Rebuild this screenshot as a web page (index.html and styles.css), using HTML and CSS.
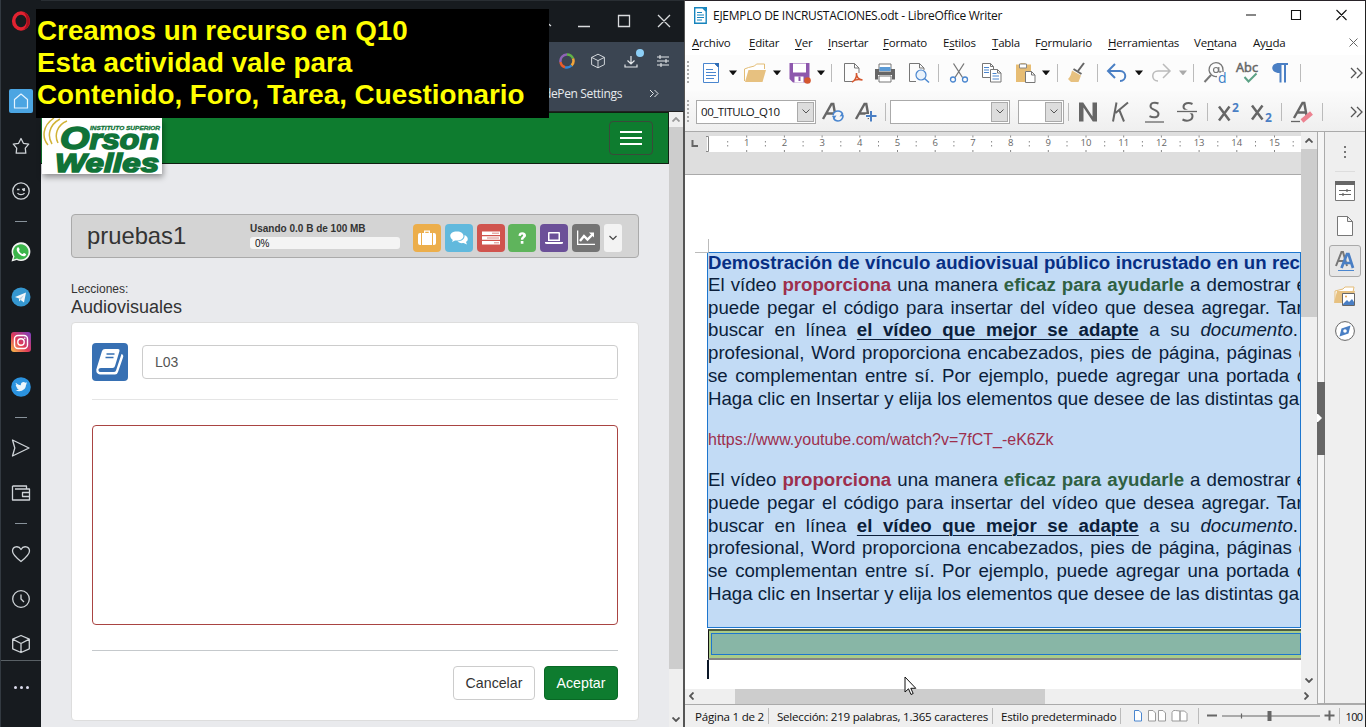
FILE: index.html
```html
<!DOCTYPE html>
<html lang="es">
<head>
<meta charset="utf-8">
<title>Q10 y LibreOffice Writer</title>
<link rel="stylesheet" href="styles.css">
</head>
<body>
<div class="screen">
<section class="opera">
  <nav class="rail">
    <div class="cell logo-cell"><svg width="20" height="20" viewBox="0 0 20 20"><ellipse cx="10" cy="10" rx="7.3" ry="8" fill="none" stroke="#e22331" stroke-width="3.6"/><path d="M12 1c4 1 6.800 4.500 6.800 9s-3 8-6.800 9c3-2 3.800-5.500 3.800-9s-.800-7-3.800-9z" fill="#a70d1c"/></svg></div>
    <div class="cell home-cell"><svg class="home" width="24" height="24" viewBox="0 0 24 24"><rect width="24" height="24" rx="2" fill="#4ba5e2"/><path d="M5.500 10.500 12 5l6.500 5.500V19h-13z" fill="none" stroke="#e5f4ff" stroke-width="1.200" stroke-linejoin="round"/></svg></div>
    <div class="cell"><svg class="ln" width="20" height="20" viewBox="0 0 20 20"><path d="m10 2.500 2.400 4.800 5.300.8-3.400 4 .5 5.100H5.200l.5-5.100-3.400-4 5.300-.8z"/></svg></div>
    <div class="cell"><svg class="ln" width="20" height="20" viewBox="0 0 20 20"><circle cx="10" cy="10" r="8.200"/><path d="M6 8.500h2.500M11 8.500l3-.8M12 9.500l2-.5M6.500 12c1.500 2.200 5.500 2.200 7 0"/></svg></div>
    <div class="dash"></div>
    <div class="cell"><svg width="20" height="20" viewBox="0 0 20 20"><path d="M.5 19.500 2 14.600A9.400 9.400 0 1 1 5.700 18z" fill="#f3f6f3"/><path d="m2.500 17.500 1-3.200A7.700 7.700 0 1 1 6 16.600z" fill="#3bb54a"/><path d="M6.500 5.500c-2 2 0 5 2 6.800s5 3 6.500.7c.4-.8 0-1-1.800-2-1.300.2-1 1.400-2 1-1-.3-2.800-2-3.200-3.200.8-1 .8-.8.2-2.500-.4-1-.9-1.300-1.700-.8z" fill="#fff"/></svg></div>
    <div class="cell"><svg width="20" height="20" viewBox="0 0 20 20"><circle cx="10" cy="10" r="9.500" fill="#3597d0"/><path d="m4 10 11-4.500-2 10-3.300-2.500-1.700 1.500v-3z" fill="#f2f7fa"/><path d="m8 11.500 5-3.500-3.300 5z" fill="#b8d4e5"/></svg></div>
    <div class="cell"><svg width="20" height="20" viewBox="0 0 20 20"><defs><linearGradient id="ig" x1="0" y1="1" x2="1" y2="0"><stop offset="0" stop-color="#f9c04a"/><stop offset=".45" stop-color="#df3b58"/><stop offset="1" stop-color="#7940c4"/></linearGradient></defs><rect width="20" height="20" rx="3" fill="url(#ig)"/><rect x="3.500" y="3.500" width="13" height="13" rx="3.500" fill="none" stroke="#fff" stroke-width="1.400"/><circle cx="10" cy="10" r="3.200" fill="none" stroke="#fff" stroke-width="1.400"/><circle cx="13.800" cy="6.200" r=".8" fill="#fff"/></svg></div>
    <div class="cell"><svg width="20" height="20" viewBox="0 0 20 20"><circle cx="10" cy="10" r="9.800" fill="#2b93df"/><path d="M4.800 5.800c1.500 1.700 3 2.400 5 2.500-.2-3 3-4 4.500-2.500l1.700-.5-.9 1.500 1.200-.3-1.300 1.300c.2 5-5.500 8-10.500 5.500 1.500 0 2.500-.3 3.300-1-1.400-.2-2-1-2.200-1.800h1c-1.200-.5-1.800-1.400-1.800-2.600l1 .2c-1-.7-1.300-1.500-1-2.300z" fill="#eaf5fc"/></svg></div>
    <div class="dash"></div>
    <div class="cell"><svg class="ln" width="20" height="20" viewBox="0 0 20 20"><path d="M1.500 2 18 10 1.500 18l2.300-8z"/></svg></div>
    <div class="cell"><svg class="ln" width="20" height="20" viewBox="0 0 20 20"><path d="M1.500 3h14v3H4M1.500 3v14h17V6h-3M18 9.500h-6.500v4H18"/></svg></div>
    <div class="dash"></div>
    <div class="cell"><svg class="ln" width="20" height="20" viewBox="0 0 20 20"><path d="M10 17.500C5 13.500 1.500 10.500 1.500 7 1.500 2.500 7.500 1 10 5.500 12.500 1 18.500 2.500 18.500 7c0 3.500-3.500 6.500-8.500 10.500z"/></svg></div>
    <div class="cell"><svg class="ln" width="20" height="20" viewBox="0 0 20 20"><circle cx="10" cy="10" r="8.300"/><path d="M10 5.500V10l3 3"/></svg></div>
    <div class="cell"><svg class="ln" width="20" height="20" viewBox="0 0 20 20"><path d="m10 1.500 8.300 3.700v9.600L10 18.500l-8.300-3.700V5.200zM1.700 5.200 10 9.500l8.300-4.300M10 9.500v9"/></svg></div>
    <div class="more"><i></i><i></i><i></i></div>
  </nav>
  <div class="browser">
    <header class="titlebar"><svg width="140" height="42" viewBox="0 0 140 42" fill="none" stroke="#d9dbdd" stroke-width="1.300"><path d="M5 23.500 8 26M35 26.500h12M75.500 15.500h11v11h-11zM115 15l12 12M127 15l-12 12"/></svg></header>
    <div class="toolbar">
      <div class="ext">
        <svg width="16" height="16" viewBox="0 0 16 16" fill="none" stroke-width="2.500"><path d="M8 1.500a6.500 6.500 0 0 1 6 4" stroke="#62b246"/><path d="M14 5.500a6.500 6.500 0 0 1-1.500 7" stroke="#f0a43a"/><path d="M12.500 12.500A6.500 6.500 0 0 1 6 14.200" stroke="#2f86d8"/><path d="M6 14.200A6.500 6.500 0 0 1 1.500 9" stroke="#e85d2b"/><path d="M1.500 9A6.500 6.500 0 0 1 8 1.500" stroke="#8e63b5"/></svg>
        <svg class="wl" width="16" height="16" viewBox="0 0 20 20"><path d="m10 1.500 8 4v9l-8 4-8-4v-9zM2 5.500l8 4 8-4M10 9.500v9"/></svg>
        <svg width="22" height="22" viewBox="0 0 22 22" fill="none" stroke="#e4e7ea" stroke-width="1.200"><path d="M2 15.500V18h12v-2.500M8 7v8M4.500 11.500 8 15l3.500-3.500"/><circle cx="17" cy="4" r="4" fill="#8dcff7" stroke="none"/></svg>
        <svg class="wl" width="14" height="14" viewBox="0 0 14 14"><path d="M1 3h12M1 7h12M1 11h12M4 1v4M10 5v4M5 9v4"/></svg>
      </div>
      <div class="bookmarks"><span>CodePen Settings</span><svg width="10" height="9" viewBox="0 0 10 9" fill="none" stroke="#e4e7ea"><path d="m1 1 3.500 3.500L1 8M5.500 1 9 4.500 5.500 8"/></svg></div>
    </div>
    <div class="viewport">
      <main class="page">
        <div class="navbar">
          <div class="brand"><svg width="120" height="56" viewBox="0 0 120 56"><g fill="none" stroke="#d1b337" stroke-width="1.500"><path d="M12 0C0 8 0 20 6 27M18 1C7 7 5 18 10 26M25 3c-10 4-13 14-9 22"/></g><g fill="#107338" stroke="#107338" font-family="Liberation Sans" font-weight="bold" font-style="italic"><text x="48" y="11.500" font-size="6" textLength="70" lengthAdjust="spacingAndGlyphs" stroke-width=".3">INSTITUTO SUPERIOR</text><text x="18" y="31" font-size="27" textLength="99" lengthAdjust="spacingAndGlyphs" stroke-width="1.600"><tspan font-size="32">O</tspan>rson</text><text x="13" y="54" font-size="26" textLength="104" lengthAdjust="spacingAndGlyphs" stroke-width="1.600">Welles</text></g></svg></div>
          <button class="burger"><i></i><i></i><i></i></button>
        </div>
        <div class="coursebar">
          <h1>pruebas1</h1>
          <div class="quota"><b>Usando 0.0 B de 100 MB</b><div class="bar">0%</div></div>
          <div class="tiles">
            <span class="tile orange"><svg viewBox="0 0 18 18"><path d="M6 4V1.500h6V4h2v12H4V4zm1.300 0h3.400V2.800H7.300zM0 6q0-2 2-2h1v12H2q-2 0-2-2zM18 6q0-2-2-2h-1v12h1q2 0 2-2z"/></svg></span>
            <span class="tile sky"><svg viewBox="0 0 18 18"><path d="M7 2.500c4 0 6.500 2 6.500 4.500S11 11.500 7 11.500l-2 0-3 1.500.8-2C-1.500 8-.500 2.500 7 2.500z"/><path d="M14.500 6c3.500 1.200 4.500 5 1.500 7l1 2.500-3.500-1.500c-3 .5-5-.5-6-1.700 4.500 0 7.500-2.500 7-6.300z"/></svg></span>
            <span class="tile red"><svg viewBox="0 0 18 18"><path d="M0 2.500h18v3.500H0zM0 7.200h18v3.500H0zM0 12h18v3.500H0z"/><path d="M10 4.200h7M5 9h12M12 13.800h5" stroke="#d98883" stroke-width="1"/></svg></span>
            <span class="tile green"><svg viewBox="0 0 18 18"><path d="M5 6.500c.3-3 1.700-4 4.200-4 3 0 4.300 1.500 4.300 3.500 0 3-3 3-3 5H7.800c0-3.500 2.500-3 2.500-5 0-1.500-2.300-1.500-2.700.8zM7.600 12.500h3v3h-3z"/></svg></span>
            <span class="tile purple"><svg viewBox="0 0 18 18"><path fill-rule="evenodd" d="M4 3h10q1 0 1 1v8H3V4q0-1 1-1zm.500 1.500v6h9v-6z"/><path d="M0 13h18v1q0 1-2 1H2q-2 0-2-1z"/></svg></span>
            <span class="tile gray"><svg viewBox="0 0 18 18"><path d="M0 1.500h1.300v13.200H18V16H0z"/><path d="m3 12 4-5 3.500 3.500 5-5" fill="none" stroke="#fff" stroke-width="2.400"/><path d="M12 3.500h5v5z"/></svg></span>
            <span class="drop"><svg width="8" height="6" viewBox="0 0 8 6" fill="none" stroke="#444" stroke-width="1.200"><path d="m.5 1 3.500 3.500L7.500 1"/></svg></span>
          </div>
        </div>
        <p class="kicker">Lecciones:</p>
        <h2>Audiovisuales</h2>
        <div class="card">
          <div class="name-row">
            <span class="book"><svg width="28" height="28" viewBox="0 0 28 28"><path d="M9 1h13q2 0 1.500 2l-4.500 15q-.5 2-2.500 2H5q-3 0-2.500 2.500.2 1.500 2 1.500h13q2 0 2.500-1.500L25.500 6q2.500 1 1.500 3.500L22 24q-.7 2.500-3 2.500H4Q0 26 .3 21.500L6 3q.7-2 3-2z" fill="#fff"/><path d="M10.500 6h8M9.500 9.500h8" stroke="#3770b3" stroke-width="1.600"/></svg></span>
            <div class="field">L03</div>
          </div>
          <div class="editor"></div>
          <div class="actions"><button class="btn">Cancelar</button><button class="btn primary">Aceptar</button></div>
        </div>
      </main>
      <div class="vscroll"><svg width="8" height="5" viewBox="0 0 8 5"><path d="m.5 4.500 3.500-3.500 3.500 3.500" fill="none" stroke="#999" stroke-width="1.800"/></svg><div class="thumb"></div><svg width="8" height="5" viewBox="0 0 8 5"><path d="m.5.5 3.500 3.500L7.500.5" fill="none" stroke="#555" stroke-width="1.800"/></svg></div>
    </div>
  </div>
  <div class="caption">Creamos un recurso en Q10<br>Esta actividad vale para<br>Contenido, Foro, Tarea, Cuestionario</div>
</section>

<section class="writer">
  <header class="wtitle"><svg width="13" height="17" viewBox="0 0 13 17"><path d="M.7.700h8l3.500 3.500v12H.7z" fill="#fff" stroke="#1684bd" stroke-width="1.400"/><path d="M8.500 0H13v4.500z" fill="#1684bd"/><path d="M3 5.500h5M3 8h7M3 10.500h7M3 13h5" stroke="#1684bd"/></svg><span>EJEMPLO DE INCRUSTACIONES.odt - LibreOffice Writer</span>
    <svg class="winbtns" width="103" height="12" viewBox="0 0 103 12" fill="none" stroke="#111" stroke-width="1.100"><path d="M1 6h10M46.500 1.500h9v9h-9zM91.500 1l10 10M101.500 1l-10 10"/></svg></header>
  <nav class="menu"><span><u>A</u>rchivo</span><span><u>E</u>ditar</span><span><u>V</u>er</span><span><u>I</u>nsertar</span><span><u>F</u>ormato</span><span>E<u>s</u>tilos</span><span><u>T</u>abla</span><span>F<u>o</u>rmulario</span><span><u>H</u>erramientas</span><span>Ve<u>n</u>tana</span><span>Ay<u>u</u>da</span><svg width="9" height="9" viewBox="0 0 9 9"><path d="m.5.5 8 8m0-8-8 8" stroke="#666"/></svg></nav>
  <div class="tb tb1">
    <i class="handle"></i>
    <svg class="ic" viewBox="0 0 22 22"><path d="M3.500 1.500h11l4 4v15h-15z" fill="#fff" stroke="#4a86cf"/><path d="M14 1h5v5z" fill="#2f6cb5"/><path d="M6 7.500h7M6 10.500h10M6 13.500h10M6 16.500h8" stroke="#4a86cf" stroke-width="1.200"/></svg>
    <i class="arr"></i>
    <svg class="ic" viewBox="0 0 22 22"><path d="M.5 19V7l4-1.500 6-1.500 2-2h8v5" fill="#fff" stroke="#e3bd76"/><path d="M1 20 4.500 8H22l-3.500 12z" fill="#e7c180"/></svg>
    <i class="arr"></i>
    <svg class="ic" viewBox="0 0 22 22"><path d="M.5 1h20v19.500H4L.5 17z" fill="#8d57ad"/><path d="M4 1.500h13v9H4z" fill="#fff"/><path d="M5.500 14.500h9v6h-9z" fill="#fff"/><path d="M9.500 14.500h2v4.500h-2z" fill="#8d57ad"/><circle cx="18.500" cy="18.500" r="3.300" fill="#d4572f"/></svg>
    <i class="arr"></i><i class="sep"></i>
    <svg class="ic" viewBox="0 0 22 22"><path d="M2.500 1.500h10l4.500 4.500V11M2.500 1.500v18H10M12.500 1.500V6H17" fill="none" stroke="#777"/><path d="M10 20c3-1 5-5 4.500-9-.5 4 2 6.500 6 7-4-1-8-.5-10.500 2z" fill="none" stroke="#d4572f" stroke-width="1.600"/></svg>
    <svg class="ic" viewBox="0 0 22 22"><path d="M5 2h12v6H5z" fill="#fff" stroke="#777"/><path d="M1 7h4v2.500h12V7h4v10.500h-3V13H4v4.500H1z" fill="#666"/><path d="M5.500 5h11v4h-11z" fill="#5b9ad5"/><path d="M5 14h12v6H5z" fill="#fff" stroke="#777"/></svg>
    <svg class="ic" viewBox="0 0 22 22"><path d="M8 19.500H1.500v-18h10L16 6v2M11.500 1.500V6H16" fill="none" stroke="#777"/><circle cx="13" cy="13" r="5" fill="#e9f2fb" stroke="#4a86cf" stroke-width="1.200"/><path d="m16.500 16.500 4.500 4" stroke="#4a86cf" stroke-width="1.500"/></svg>
    <i class="sep"></i>
    <svg class="ic" viewBox="0 0 22 22" fill="none"><path d="m5.500 1.500 9 14M16 1.500l-9 14" stroke="#777" stroke-width="1.300"/><circle cx="5" cy="17.500" r="2.500" stroke="#4a86cf" stroke-width="1.300"/><circle cx="17" cy="17.500" r="2.500" stroke="#4a86cf" stroke-width="1.300"/></svg>
    <svg class="ic" viewBox="0 0 22 22" fill="#fff" stroke="#777"><path d="M1.500 1.500h8l3 3v11h-11zM9.500 1.500v3h3"/><path d="M3 5.500h5M3 8h5M3 10.500h5" stroke="#4a86cf"/><path d="M9.500 7.500h7l3.500 3.500v9H9.500zM16.500 7.500V11H20"/><path d="M11.500 11.500h4M11.500 14h6.500M11.500 17h6.500" stroke="#4a86cf"/></svg>
    <svg class="ic" viewBox="0 0 22 22"><path d="M1 2.500h4.500V1h5v1.500H16V9h-6v11H1z" fill="#e7bd74"/><path d="M4.500 2h7v4h-7z" fill="#fff" stroke="#888"/><path d="M10.500 9.500h6l3.500 3.500v7.500h-9.500zM16.500 9.500V13H20" fill="#fff" stroke="#777"/></svg>
    <i class="arr"></i><i class="sep"></i>
    <svg class="ic" viewBox="0 0 22 22"><path d="m18 1-6 8" stroke="#666" stroke-width="2"/><path d="m7.500 7 8 5" stroke="#666" stroke-width="2"/><path d="m6 8.500 9 5-2.500 6.500H5l-3-3c2-2 3-4 4-8.500z" fill="#e7c180"/></svg>
    <i class="sep"></i>
    <svg class="ic" viewBox="0 0 22 22"><path d="M9 2 2 9l7 7M2.500 9H14c7 0 7 10 0 10" fill="none" stroke="#4a7fc4" stroke-width="2"/></svg>
    <i class="arr"></i>
    <svg class="ic" viewBox="0 0 22 22"><path d="m13 2 7 7-7 7M19.500 9H8c-7 0-7 10 0 10" fill="none" stroke="#bbb" stroke-width="1.500"/></svg>
    <i class="arr dim"></i><i class="sep"></i>
    <svg class="ic" viewBox="0 0 22 22"><path d="M13 14.500A7 7 0 1 1 19 8v2" fill="none" stroke="#777" stroke-width="1.300"/><path d="m7 13-6.500 7" stroke="#777" stroke-width="2"/><circle cx="12" cy="8" r="2.500" fill="none" stroke="#777" stroke-width="1.200"/><path d="M14.800 5v4.500q1.500 1.500 2.500-.5" fill="none" stroke="#777" stroke-width="1.200"/><text x="14" y="21" font-size="14" fill="#3b80c5">d</text></svg>
    <svg class="ic" viewBox="0 0 22 22"><text x="0" y="10" font-size="12" fill="#666" textLength="22" lengthAdjust="spacingAndGlyphs" stroke="#666" stroke-width=".5">Abc</text><path d="m8.500 15 4 4.500 8-8" fill="none" stroke="#5da286" stroke-width="2"/></svg>
    <svg class="ic" viewBox="0 0 22 22"><path d="M19 1v2h-2v17.500h-2V3h-2.500v17.500h-2V11C1 11 1 1 10 1z" fill="#4a7fc4"/></svg>
    <i class="sep"></i>
    <svg class="chev" viewBox="0 0 13 12"><path d="m1 1 5 5-5 5M7 1l5 5-5 5"/></svg>
  </div>
  <div class="tb tb2">
    <i class="handle"></i>
    <div class="combo wide"><span>00_TITULO_Q10</span><b><svg viewBox="0 0 8 5"><path d="m.5.5 3.500 3.500L7.500.5"/></svg></b></div>
    <svg class="ic" viewBox="0 0 22 22"><path class="pA" d="M1 18 9.500 3h1.800L14 18M4.500 12.500h8"/><circle cx="16" cy="15" r="5" fill="#f5f5f5" stroke="#4a86cf" stroke-width="1.600" stroke-dasharray="13 3"/><path d="m10 15 4.500-.5-2.500 4zM22 15l-4.500.5L20 12z" fill="#4a86cf"/></svg>
    <svg class="ic" viewBox="0 0 22 22"><path class="pA" d="M1 18 9.500 3h1.800L14 18M4.500 12.500h8"/><path d="M10.500 15H22M16 9.500V21" stroke="#f5f5f5" stroke-width="4"/><path d="M11 15h10.500M16 10v10.500" stroke="#4a7fc4" stroke-width="2"/></svg>
    <i class="sep"></i>
    <div class="combo wide"><span></span><b><svg viewBox="0 0 8 5"><path d="m.5.5 3.500 3.500L7.500.5"/></svg></b></div>
    <div class="combo small"><span></span><b><svg viewBox="0 0 8 5"><path d="m.5.5 3.500 3.500L7.500.5"/></svg></b></div>
    <i class="sep"></i>
    <svg class="ic" viewBox="0 0 22 22"><path d="M2 20.500V1.500h4.200l9.300 14V1.500H20v19h-4.200L6.500 6.500v14z" fill="#666"/></svg>
    <svg class="ic" viewBox="0 0 22 22"><path d="M7.500 1.500 4 20.500M19 1.500 6.500 12M10.500 9.500l4.500 11" fill="none" stroke="#666" stroke-width="2"/></svg>
    <svg class="ic" viewBox="0 0 22 22"><path d="M15.500 2.500c-3.500-1.500-8-1-8 2.700 0 4 8 3.500 8 7.500 0 4.300-5.500 4.300-9 2.500" fill="none" stroke="#666" stroke-width="2"/><path d="M2 21h19" stroke="#666" stroke-width="1.300"/></svg>
    <svg class="ic" viewBox="0 0 22 22"><path d="M16.500 3c-4-2-9-1-9 3 0 4 9 4 9 9s-6 5.500-10 3.500" fill="none" stroke="#666" stroke-width="2"/><path d="M1 10.500h20" stroke="#f5f5f5" stroke-width="3.500"/><path d="M1 10.500h20" stroke="#666" stroke-width="1.300"/></svg>
    <i class="sep"></i>
    <svg class="ic" viewBox="0 0 22 22"><path d="m1 5.500 10.500 14M11.500 5.500 1 19.500" stroke="#666" stroke-width="2.500"/><text class="num" x="14" y="11">2</text></svg>
    <svg class="ic" viewBox="0 0 22 22"><path d="m1 4.500 10.500 14M11.500 4.500 1 18.500" stroke="#666" stroke-width="2.500"/><text class="num" x="14" y="21">2</text></svg>
    <i class="sep"></i>
    <svg class="ic" viewBox="0 0 22 22"><path class="pA" d="M3 17 11.500 2h1.800L16 17M6.500 11.500h8"/><path d="M0 20.500h9" stroke="#666" stroke-width="1.300"/><path d="m11 20 9.500-8" stroke="#ec8290" stroke-width="4.500"/></svg>
    <i class="sep"></i>
    <svg class="chev" viewBox="0 0 13 12"><path d="m1 1 5 5-5 5M7 1l5 5-5 5"/></svg>
  </div>
  <div class="work">
    <div class="docpane">
      <div class="docrow">
        <div class="canvas">
          <div class="ruler"><svg id="ruler" width="617" height="42"></svg></div>
          <div class="sheet">
            <svg class="crop" width="14" height="14" viewBox="0 0 14 14"><path d="M0 13.500h13.500V0" fill="none" stroke="#bbb"/></svg>
            <div class="selection">
              <div class="line title" style="width:592px">Demostración de vínculo audiovisual público incrustado en un rec</div>
              <div class="line" style="width:599px">El vídeo <b class="rd">proporciona</b> una manera <b class="gr">eficaz para ayudarle</b> a demostrar e</div>
              <div class="line" style="width:604px">puede pegar el código para insertar del vídeo que desea agregar. Tam</div>
              <div class="line" style="width:590px">buscar en línea <b><u>el vídeo que mejor se adapte</u></b> a su <i>documento</i>.</div>
              <div class="line" style="width:601px">profesional, Word proporciona encabezados, pies de página, páginas d</div>
              <div class="line" style="width:598px">se complementan entre sí. Por ejemplo, puede agregar una portada c</div>
              <div class="line" style="width:591px">Haga clic en Insertar y elija los elementos que desee de las distintas ga</div>
              <div class="url">https://www.youtube.com/watch?v=7fCT_-eK6Zk</div>
              <div class="line" style="width:599px">El vídeo <b class="rd">proporciona</b> una manera <b class="gr">eficaz para ayudarle</b> a demostrar e</div>
              <div class="line" style="width:604px">puede pegar el código para insertar del vídeo que desea agregar. Tam</div>
              <div class="line" style="width:590px">buscar en línea <b><u>el vídeo que mejor se adapte</u></b> a su <i>documento</i>.</div>
              <div class="line" style="width:601px">profesional, Word proporciona encabezados, pies de página, páginas d</div>
              <div class="line" style="width:598px">se complementan entre sí. Por ejemplo, puede agregar una portada c</div>
              <div class="line" style="width:591px">Haga clic en Insertar y elija los elementos que desee de las distintas ga</div>
            </div>
            <div class="table"><div></div></div>
            <div class="caret"></div>
          </div>
        </div>
        <div class="vbar"><svg width="8" height="5" viewBox="0 0 8 5"><path d="m.5 4.500 3.500-3.500 3.500 3.500"/></svg><div></div><svg width="8" height="5" viewBox="0 0 8 5"><path d="m.5.5 3.500 3.500L7.500.5"/></svg></div>
      </div>
      <div class="hbar"><svg width="5" height="8" viewBox="0 0 5 8"><path d="M4.500.5 1 4l3.500 3.500"/></svg><div></div><svg width="5" height="8" viewBox="0 0 5 8"><path d="M.5.5 4 4 .5 7.500"/></svg></div>
    </div>
    <div class="splitter"><div><svg width="5" height="8" viewBox="0 0 5 8"><path d="M0 0h1l4 4-4 4H0z" fill="#fff"/></svg></div></div>
    <aside class="side">
      <svg class="dots" width="4" height="14" viewBox="0 0 4 14"><path d="M1 1h2v2H1zM1 6h2v2H1zM1 11h2v2H1z" fill="#777"/></svg>
      <hr>
      <span><svg width="20" height="20" viewBox="0 0 20 20"><path d="M.5.500h19v19H.5z" fill="#fff" stroke="#777"/><path d="M0 0h20v4H0z" fill="#666"/><path d="M4 9.500h12M4 13.500h12M12 8v3M8 12v3" stroke="#666" stroke-width="1.200"/></svg></span>
      <span><svg width="16" height="20" viewBox="0 0 16 20"><path d="M.5.500h10l5 5v14H.5zM10.500.500v5h5" fill="#fff" stroke="#777"/></svg></span>
      <span class="active"><svg width="20" height="20" viewBox="0 0 20 20"><path d="m1 15 5.500-14h1.500l4 14M3 10h8" fill="none" stroke="#777" stroke-width="2"/><path d="m6.500 17 5.500-14h1.500l4.500 14M8.500 12h8" fill="none" stroke="#4a7fc4" stroke-width="2.700"/><path d="M3 19.500h16" stroke="#4a86cf"/></svg></span>
      <span><svg width="22" height="20" viewBox="0 0 22 20"><path d="M1 16V5l8-2 2-2h9l-1 5" fill="#fff" stroke="#e5bd78"/><path d="M0 17 3 5h18l-3 12z" fill="#e7c180"/><path d="M8.500 7.500h12v12h-12z" fill="#fff" stroke="#666"/><path d="m9 18 4-4 2 2 3-3 2 3v3H9z" fill="#4a7fc4"/><circle cx="12" cy="10.500" r="1" fill="#e5a54c"/></svg></span>
      <span><svg width="20" height="20" viewBox="0 0 20 20"><circle cx="10" cy="10" r="9.400" fill="#fff" stroke="#666"/><path d="m15.500 4.500-2 8-9 3 2-8z" fill="#4a7fc4"/><circle cx="10" cy="10" r="1.800" fill="#fff"/></svg></span>
    </aside>
  </div>
  <footer class="status"><span>Página 1 de 2</span><i></i><span>Selección: 219 palabras, 1.365 caracteres</span><i></i><span>Estilo predeterminado</span><i></i>
    <svg class="views" width="55" height="12" viewBox="0 0 55 12" fill="#fff" stroke="#999"><path d="M.5.500h4.500l2.500 2.500v8h-7z" stroke="#4a86cf"/><path d="M14.500.500h4.500l2.500 2.500v8h-7zM24.500.500h4.500l2.500 2.500v8h-7zM41.500.500h-2l-1.500 2v8.500h8v-10zM46 1h4.500l2.500 2.500v7.500h-7z"/></svg><i></i>
    <svg width="128" height="12" viewBox="0 0 128 12" stroke="#666"><path d="M0 5.500h10M117.500 5.500h10M122.500.500v10" stroke-width="2"/><path d="M15 6h98M34.500 3.500v5" stroke-width="1.200"/><path d="M62.500 1v10" stroke-width="4"/></svg><i class="last"></i><span class="zoom">100</span></footer>
  <svg class="cursor" width="13" height="20" viewBox="0 0 13 20"><path d="M1 1v15l3.500-3.200L7 18.500l2.200-1-2.400-5.200h5z" fill="#fff" stroke="#111"/></svg>
</section>
</div>
<script src="ruler.js"></script>
</body>
</html>
```

FILE: styles.css
```css
*{box-sizing:border-box}
body{margin:0;background:#fff}
h1,h2,p,hr{margin:0}
svg{display:block;flex:none}
.screen{display:flex;width:1366px;height:727px;overflow:hidden;font-family:"Liberation Sans",Arial,sans-serif}
.opera{position:relative;display:flex;width:684px;height:727px;flex:none;background:#171b1f}
.rail{display:flex;flex-direction:column;width:41px;padding-top:11px;background:#171b1f;border-left:1px solid #333a41;flex:none}
.cell{display:grid;place-items:center;height:45px;flex:none}
.logo-cell{height:20px}
.home-cell{height:92px;padding-top:47px}
.ln{fill:none;stroke:#cfd4d8;stroke-width:1.3;stroke-linejoin:round}
.dash{width:12px;height:1px;margin:8px auto 7px;background:#88929a;flex:none}
.more{display:flex;justify-content:center;gap:3px;flex:1;padding-top:25px;margin-top:-6px;border-top:1px solid #596065}
.more i{width:3px;height:3px;border-radius:50%;background:#dde}
.browser{display:flex;flex-direction:column;flex:1}
.titlebar{display:flex;justify-content:flex-end;height:42px;border-top:1px solid #292e33;padding-right:1px}
.titlebar svg{margin-top:-1px}
.toolbar{height:69px;background:#3b4552}
.ext{display:flex;justify-content:flex-end;align-items:center;height:38px;padding-right:14px;gap:15px}
.ext svg:nth-child(3){margin:-3px -4px 0 2px}
.wl{fill:none;stroke:#e4e7ea;stroke-width:1.1}
.bookmarks{display:flex;justify-content:flex-end;align-items:center;gap:27px;height:27px;padding-right:25px;color:#e8ebee;font:12px "Open Sans",sans-serif;letter-spacing:-.35px}
.viewport{display:flex;height:616px;border-top:1px solid #222;border-right:1px solid #555}
.page{flex:1;background:#e9eaed;padding-bottom:7px}
.navbar{display:flex;justify-content:space-between;height:52px;background:#0e7c2f;border:1px solid #102013;border-left:0;padding:9px 15px 0 0}
.brand{width:120px;height:56px;margin:-4px 0 0 1px;background:#fff;box-shadow:1px 3px 6px #0006}
.burger{display:grid;align-content:center;justify-items:center;gap:4px;width:44px;height:34px;margin-top:-1px;padding:0;border:1px solid #3a4a3a;border-radius:4px;background:transparent}
.burger i{width:22px;height:2px;background:#fff}
.coursebar{display:flex;align-items:center;width:568px;height:44px;margin:50px 0 0 30px;border:1px solid #aaa;border-radius:4px;background:#d4d4d4}
h1{width:163px;padding-left:15px;margin-right:15px;font-size:23.8px;font-weight:400;color:#333;line-height:40px}
.quota{width:150px;margin-top:-1px;font-size:10px;color:#333}
.quota b{display:block;line-height:13px;white-space:nowrap;font-size:10px}
.bar{height:12px;margin-top:2px;border-radius:3px;background:#f4f4f4;padding-left:5px;line-height:13px;color:#111}
.tiles{display:flex;gap:3.8px;margin:3px 0 0 13px}
.tile{display:grid;place-items:center;width:28px;height:28px;border-radius:4px}
.tile svg{width:18px;height:18px;fill:#fff}
.tile.green svg{width:16px}
.orange{background:#ecae4b}.sky{background:#61b9dd}.red{background:#d0544e}.green{background:#5fb45c}.purple{background:#6b5098}.gray{background:#747474}
.drop{display:grid;place-items:center;width:18px;height:28px;border-radius:3px;background:#f3f3f3}
.kicker{margin:24px 0 0 30px;font-size:12px;line-height:15px;color:#333}
h2{margin:0 0 0 30px;font-size:18px;font-weight:400;line-height:20px;color:#333}
.card{width:568px;height:399px;margin:5px 0 0 30px;padding:20px;border:1px solid #ddd;border-radius:4px;background:#fff}
.name-row{display:flex;align-items:center;gap:14px;height:57px;padding-bottom:18px;border-bottom:1px solid #e5e5e5}
.book{display:grid;place-items:center;width:36px;height:38px;border-radius:4px;background:#3770b3}
.field{width:476px;height:34px;border:1px solid #ccc;border-radius:4px;padding-left:12px;font-size:14px;line-height:33px;color:#555}
.editor{height:200px;margin-top:25px;border:1px solid #a94442;border-radius:4px}
.actions{display:flex;justify-content:flex-end;gap:9px;margin-top:25px;padding-top:15px;border-top:1px solid #c5c9cc}
.btn{width:82px;height:34px;padding:0;border:1px solid #ccc;border-radius:4px;background:#fff;font:14.2px "Liberation Sans",sans-serif;color:#333}
.primary{width:74px;border-color:#096825;background:#0e7c2f;color:#fff}
.vscroll{display:flex;flex-direction:column;align-items:center;width:14px;padding:5px 0;background:#efefef}
.vscroll .thumb{width:14px;height:542px;margin:5px 0 auto;background:#cdcdcd}
.caption{position:absolute;left:36px;top:9px;width:513px;height:109px;padding:6px 0 0 1px;background:#000;color:#ff0;font-weight:700;font-size:27.8px;line-height:32px;white-space:nowrap}

.writer{position:relative;display:flex;flex-direction:column;width:682px;height:727px;border-top:1px solid #292329;border-left:1px solid #555;border-right:1px solid #222;background:#efefef;font-family:"Open Sans","Noto Sans",sans-serif;font-size:12px;color:#111;overflow:hidden}
.wtitle{display:flex;align-items:center;height:29px;padding-left:9px;gap:6px;background:#fff;letter-spacing:-.27px;white-space:nowrap}
.winbtns{margin-left:auto;margin-right:17px}
.menu{display:grid;grid-template-columns:57px 46px 33px 55px 60px 49px 43px 73px 86px 59px 96px 9px;align-items:center;height:25px;padding-left:7px;background:#fff;font-size:11.5px;letter-spacing:-.22px;white-space:nowrap}
.menu u{text-underline-offset:2px}
.tb{display:grid;align-items:center;padding-left:2px}
.tb1{grid-template-columns:13px 29px 15px 29px 16px 28px 14px 11px 32px 34px 30px 10px 33px 34px 27px 15px 9px 31px 9px 29px 15px 29px 14px 11px 32px 33px 31px 50px 13px;height:36px;background:#fcfcfc}
.tb2{grid-template-columns:9px 126px 33px 30px 5px 128px 50px 9px 32px 34px 33px 31px 11px 33px 30px 10px 31px 28px 13px;height:41px;padding-top:2px;background:linear-gradient(#fbfbfb,#efefef);border-bottom:1px solid #aaa}
.ic{width:22px;height:22px;font-family:"Open Sans",sans-serif;overflow:visible}
.handle{width:2px;height:23px;background:repeating-linear-gradient(#aaa 0 2px,transparent 2px 4px)}
.arr{width:8px;height:5px;background:#111;clip-path:polygon(0 0,100% 0,50% 100%)}
.arr.dim{background:#aaa}
.sep{width:1px;height:18px;background:#bbb}
.chev{width:13px;height:12px;fill:none;stroke:#555;stroke-width:1.3}
.combo{display:flex;height:24px;border:1px solid #aaa;background:#fff;padding:1px}
.wide{width:120px}.small{width:46px}
.combo span{flex:1;padding-left:3px;font-size:11.5px;line-height:20px;letter-spacing:-.45px;white-space:nowrap}
.combo b{display:grid;place-items:center;width:17px;background:#ddd;border:1px solid #aaa}
.combo svg{width:8px;fill:none;stroke:#555}
.pA{fill:none;stroke:#666;stroke-width:2.4}
.num{font:700 12px "Open Sans",sans-serif;fill:#4a7fc4}
.work{display:flex;height:573px}
.docpane{width:632px;flex:none}
.docrow{display:flex;height:557px}
.canvas{width:616px;overflow:hidden;background:#fff;flex:none}
.ruler{height:43px;background:#dedede;border-bottom:1px solid #aaa}
.sheet{height:514px;padding-top:64px;background:#fff}
.crop{margin:0 0 0 10px}
.selection{width:594px;height:376px;margin:-1px 0 0 22px;border:1px solid #1d76ce;background:#c2dbf5;overflow:hidden;font:18.67px "Liberation Sans",Arial,sans-serif;color:#0b1e3a}
.line{height:22.9px;line-height:20px;text-align:justify;text-align-last:justify;white-space:nowrap}
.title{height:21.8px;font-weight:700;color:#072f84}
.line u{text-decoration-thickness:1px;text-underline-offset:3px}
.rd{color:#9d2f4d}.gr{color:#2f6042}
.url{height:57.8px;padding-top:17.8px;font-size:16px;line-height:20px;color:#9d2f4d}
.table{width:593px;height:31px;margin:1px 0 0 23px;padding:2px 0 3px 2px;background:#a9cb88;border-top:2px solid #4d5d42;border-bottom:2px solid #858585;border-left:1px solid #111}
.table div{height:22px;border:1px solid #1d76ce;background:#88b6a6}
.caret{width:2px;height:19px;margin-left:22px;background:#0b1728}
.vbar{display:flex;flex-direction:column;align-items:center;width:16px;padding:6px 0}
.vbar svg,.hbar svg{fill:none;stroke:#555;stroke-width:1.8}
.vbar div{width:16px;height:168px;margin:6px 0 auto;background:#cdcdcd}
.hbar{display:flex;align-items:center;height:15px;padding:0 8px 0 4px}
.hbar div{width:310px;height:15px;margin:0 auto 0 41px;background:#cdcdcd}
.splitter{width:8px;padding-top:250px;border:1px solid #aaa;border-top:0;background:#f5f5f5}
.splitter div{display:flex;align-items:center;width:8px;height:73px;margin-left:-1px;background:#666}
.side{display:flex;flex-direction:column;align-items:center;flex:1;border-bottom:1px solid #aaa}
.dots{margin-top:13px}
hr{width:20px;height:1px;border:0;background:#ddd;margin-top:12px}
.side span{display:grid;place-items:center;width:32px;height:32px;margin-top:3px}
.side .active{border:1px solid #aaa;border-radius:3px;background:#e7e7e7}
.status{display:flex;align-items:center;height:23px;padding-left:10px;border-top:1px solid #aaa;font-size:11.6px;letter-spacing:-.24px;white-space:nowrap}
.status i{width:1px;height:16px;background:#bbb;margin:0 8px 0 4px;flex:none}
.status .views{margin:0 5px 0 5px}
.status .last{margin:0 5px 0 4px}
.status .zoom{font-size:11px;letter-spacing:-.6px}
.cursor{position:absolute;left:219px;top:675px}
```

FILE: ruler.js
```javascript
// Centimetre ruler: numbers and ticks every 37.7px from the left margin.
const svg = document.getElementById('ruler');
let out = '<rect x="22" y="4" width="595" height="16" fill="#fff"/>' +
  '<path d="M7.500 8v6H13" fill="none" stroke="#666" stroke-width="2"/>' +
  '<path d="M21 4.500h2.500v15H21" fill="none" stroke="#888"/>';
for (let n = 1; n <= 16; n++) {
  const x = 24 + n * 37.7;
  const mid = x - 19;
  out += `<path d="M${mid} 9v1.500M${mid} 13v1.500M${x} 3.500v2M${x} 18v2" stroke="#888"/>`;
  if (n < 16) out += `<text x="${x}" y="14" text-anchor="middle" font-size="9.500" fill="#666">${n}</text>`;
}
svg.innerHTML = out;
```
